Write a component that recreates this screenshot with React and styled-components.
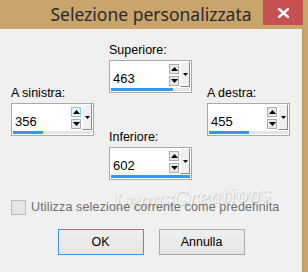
import React from 'react';
import styled, { createGlobalStyle } from 'styled-components';

const GlobalStyle = createGlobalStyle`
  html, body {
    margin: 0;
    padding: 0;
    background: #c9a46b;
  }
  body {
    font-family: "Liberation Sans", Arial, sans-serif;
  }
`;

const Frame = styled.div`
  width: 308px;
  height: 272px;
  background: #c9a46b;
  padding-right: 5px;
  box-sizing: border-box;
  display: flex;
  flex-direction: column;
  overflow: hidden;
`;

const TitleBar = styled.div`
  height: 29px;
  display: flex;
  align-items: flex-start;
  flex-shrink: 0;
`;

const Title = styled.div`
  flex: 1;
  padding-left: 39px;
  text-align: center;
  font-family: "Noto Sans", sans-serif;
  font-size: 17.5px;
  line-height: 28px;
  color: #2b2b2b;
  white-space: nowrap;
`;

const CloseButton = styled.div`
  width: 40px;
  height: 25px;
  background: #c75050;
  display: flex;
  align-items: center;
  justify-content: center;
`;

const Body = styled.div`
  flex: 1;
  position: relative;
  background: #f0f0f0;
  border-right: 1px solid #b8976a;
  padding-top: 14px;
`;

const Fields = styled.div`
  display: flex;
  align-items: flex-start;
  padding-left: 11px;
  gap: 15px;
`;

const Column = styled.div`
  display: flex;
  flex-direction: column;
  padding-top: ${p => (p.$side ? '43px' : '0')};
  gap: 37px;
`;

const Field = styled.div`
  display: flex;
  flex-direction: column;
  gap: 2px;
`;

const Label = styled.div`
  font-size: 12.5px;
  line-height: 15px;
  color: #000;
`;

const Box = styled.div`
  width: 83px;
  height: 33px;
  box-sizing: border-box;
  border: 1px solid #a7a9ae;
  background: #fff;
  display: flex;
  flex-direction: column;
`;

const BoxTop = styled.div`
  flex: 1;
  display: flex;
  align-items: flex-start;
  padding-left: 3px;
`;

const Value = styled.div`
  flex: 1;
  font-size: 13px;
  line-height: 14px;
  padding-top: 11px;
  color: #000;
`;

const Spinner = styled.div`
  display: flex;
  flex-direction: column;
  gap: 2px;
  padding-top: 3px;
  margin-right: 1px;
`;

const SpinButton = styled.div`
  width: 10px;
  height: 10px;
  box-sizing: border-box;
  border: 1px solid ${p => (p.$hot ? '#8cc4ef' : '#adadad')};
  background: ${p => (p.$hot ? '#e5f1fb' : '#e8e8e8')};
  display: flex;
  align-items: center;
  justify-content: center;
`;

const DropButton = styled.div`
  width: 10px;
  height: 26px;
  box-sizing: border-box;
  border-top: 1px solid #ffffff;
  border-left: 1px solid #ffffff;
  border-right: 1px solid #8a8a8a;
  border-bottom: 1px solid #8a8a8a;
  background: #f0f0f0;
  display: flex;
  align-items: center;
  justify-content: center;
  margin-right: 1px;
`;

const Track = styled.div`
  height: 3px;
  margin: 0 1px 1px 1px;
  background: #e6e6e6;
`;

const Fill = styled.div`
  height: 100%;
  background: #3296f2;
`;

const CheckRow = styled.div`
  position: relative;
  display: flex;
  align-items: center;
  gap: 5px;
  padding-left: 11px;
  margin-top: 20px;
`;

const CheckBox = styled.div`
  width: 15px;
  height: 15px;
  flex-shrink: 0;
  box-sizing: border-box;
  border: 1px solid #bcbcbc;
  background: #e6e6e6;
`;

const CheckLabel = styled.div`
  font-size: 12.5px;
  letter-spacing: 0.15px;
  color: #6d6d6d;
  line-height: 15px;
  white-space: nowrap;
`;

const Buttons = styled.div`
  display: flex;
  justify-content: center;
  gap: 15px;
  margin-top: 14px;
`;

const Button = styled.div`
  width: 86px;
  height: 26px;
  box-sizing: border-box;
  border: 1px solid ${p => (p.$default ? '#3399ff' : '#acacac')};
  background: linear-gradient(#efefef, #e5e5e5);
  display: flex;
  align-items: center;
  justify-content: center;
  font-size: 12.5px;
  color: #000;
`;

const Watermark = styled.div`
  position: absolute;
  left: 114px;
  top: 157px;
  font-family: "DejaVu Serif", serif;
  font-style: italic;
  font-size: 19px;
  letter-spacing: 0.5px;
  color: #f7f7f7;
  text-shadow: 1px 1px 0 #cbcbcb, -1px 0 0 #d8d8d8;
  pointer-events: none;
  transform: rotate(-3deg);
`;

const Up = () => (
  <svg width="7" height="4" viewBox="0 0 7 4"><path d="M0 4 L3.5 0 L7 4 Z" fill="#000" /></svg>
);
const Down = () => (
  <svg width="7" height="4" viewBox="0 0 7 4"><path d="M0 0 L7 0 L3.5 4 Z" fill="#000" /></svg>
);
const Caret = () => (
  <svg width="5" height="3" viewBox="0 0 5 3"><path d="M0 0 L5 0 L2.5 3 Z" fill="#000" /></svg>
);

function NumberField({ label, value, max, hot }) {
  const pct = Math.min(1, value / max) * 100;
  return (
    <Field>
      <Label>{label}</Label>
      <Box>
        <BoxTop>
          <Value>{value}</Value>
          <Spinner>
            <SpinButton $hot={hot}><Up /></SpinButton>
            <SpinButton><Down /></SpinButton>
          </Spinner>
          <DropButton><Caret /></DropButton>
        </BoxTop>
        <Track><Fill style={{ width: `${pct}%` }} /></Track>
      </Box>
    </Field>
  );
}

export default function App() {
  return (
    <>
      <GlobalStyle />
      <Frame>
        <TitleBar>
          <Title>Selezione personalizzata</Title>
          <CloseButton>
            <svg width="11" height="10" viewBox="0 0 11 10">
              <path d="M1 1 L10 9 M10 1 L1 9" stroke="#fff" strokeWidth="2.4" strokeLinecap="square" />
            </svg>
          </CloseButton>
        </TitleBar>
        <Body>
          <Watermark>LenasCreations</Watermark>
          <Fields>
            <Column $side>
              <NumberField label="A sinistra:" value={356} max={930} hot />
            </Column>
            <Column>
              <NumberField label="Superiore:" value={463} max={590} />
              <NumberField label="Inferiore:" value={602} max={590} />
            </Column>
            <Column $side>
              <NumberField label="A destra:" value={455} max={900} />
            </Column>
          </Fields>
          <CheckRow>
            <CheckBox />
            <CheckLabel>Utilizza selezione corrente come predefinita</CheckLabel>
          </CheckRow>
          <Buttons>
            <Button $default>OK</Button>
            <Button>Annulla</Button>
          </Buttons>
        </Body>
      </Frame>
    </>
  );
}
